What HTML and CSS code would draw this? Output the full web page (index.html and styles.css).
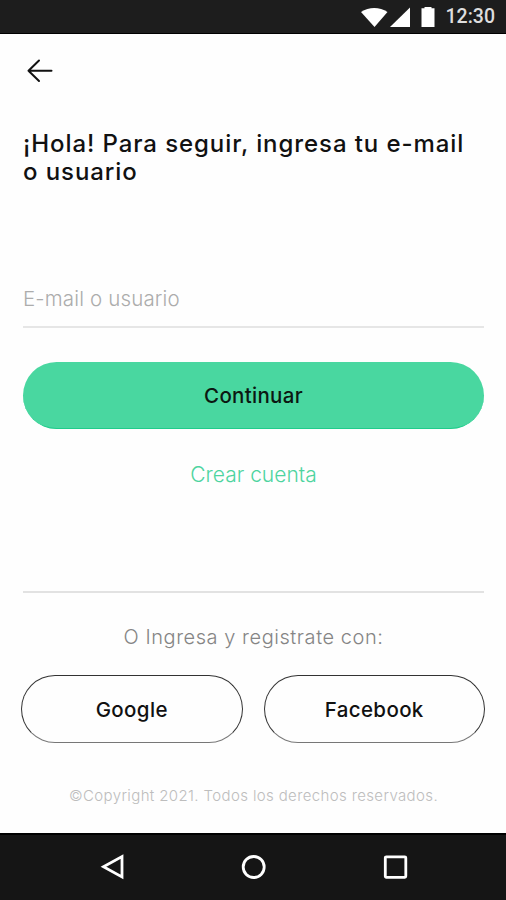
FILE: index.html
```
<!DOCTYPE html>
<html lang="es">
<head>
  <meta charset="UTF-8">
  <meta name="viewport" content="width=device-width, initial-scale=1">
  <title>Ingresar</title>
  <link rel="stylesheet" href="styles.css">
</head>
<body>
  <header class="status-bar">
    <svg width="76" height="22" viewBox="0 0 76 22" fill="#fff">
      <path d="M0 6C8 0.5 18.500 0.5 26.500 6L13.500 21Z"/>
      <path d="M49 1.500V21H29Z"/>
      <path d="M63.500 1h7v1.300h3V21H60.500V2.300H63.500Z"/>
    </svg>
    <span class="time">12:30</span>
  </header>

  <main>
    <a class="back" href="#" aria-label="Volver">
      <svg width="26" height="24" viewBox="0 0 26 24" fill="none" stroke="#111" stroke-width="2" stroke-linecap="round" stroke-linejoin="round">
        <path d="M12 1.500L1.500 11.700L12 22M1.500 11.700H24.500"/>
      </svg>
    </a>

    <h1>¡Hola! Para seguir, ingresa tu e-mail<br>o usuario</h1>

    <form>
      <input type="text" class="user" placeholder="E-mail o usuario">
      <button type="button" class="continue">Continuar</button>
    </form>
    <a class="create" href="#">Crear cuenta</a>

    <section class="social">
      <p class="social-title">O Ingresa y registrate con:</p>
      <div class="social-buttons">
        <button type="button" class="google">Google</button>
        <button type="button" class="facebook">Facebook</button>
      </div>
    </section>

    <footer>©Copyright 2021. Todos los derechos reservados.</footer>
  </main>

  <nav class="nav-bar">
    <svg width="26" height="28" viewBox="0 0 26 28"><path d="M4.500 12.700L23 2.500V22.900Z"/></svg>
    <svg width="26" height="28" viewBox="0 0 26 28"><circle cx="12.700" cy="13" r="10.500"/></svg>
    <svg width="26" height="28" viewBox="0 0 26 28"><rect x="2.300" y="2.800" width="20.500" height="20.500" rx="1"/></svg>
  </nav>
</body>
</html>
```
FILE: styles.css
```
* {
  box-sizing: border-box;
}

body {
  margin: 0;
  height: 900px;
  display: flex;
  flex-direction: column;
  background: #fefefe;
  color: #111;
  font-family: Inter, sans-serif;
  overflow: hidden;
}

a {
  text-decoration: none;
}

button,
input {
  font-family: inherit;
}

.status-bar {
  height: 34px;
  padding: 0 11px 0 0;
  display: flex;
  justify-content: flex-end;
  gap: 9px;
  background: #1d1d1d;
  border-bottom: 1px solid #000;
}

.status-bar svg {
  margin-top: 6px;
}

.time {
  color: #dedede;
  font-family: Roboto, sans-serif;
  font-size: 19.5px;
  font-weight: 500;
  line-height: 33px;
}

main {
  flex: 1;
  padding: 25px 22px 0 23px;
}

.back {
  display: block;
  height: 24px;
  padding-left: 4px;
}

.back svg {
  display: block;
}

h1 {
  margin: 47px 0 0;
  font-size: 24px;
  font-weight: 500;
  line-height: 28px;
  letter-spacing: 0.92px;
  white-space: nowrap;
}

.user {
  display: block;
  width: 100%;
  height: 58px;
  margin-top: 84px;
  padding: 0;
  border: none;
  border-bottom: 2px solid #e6e6e6;
  background: none;
  font-size: 20.5px;
  font-weight: 300;
  letter-spacing: 0.15px;
}

.user::placeholder {
  color: #acacac;
}

.continue {
  display: block;
  width: 100%;
  height: 67px;
  margin-top: 34px;
  border: none;
  border-bottom: 1px solid #1fcc8b;
  border-radius: 34px;
  background: #49d7a0;
  color: #0c1712;
  font-size: 20.5px;
  font-weight: 500;
  letter-spacing: 0.3px;
}

.create {
  display: block;
  margin-top: 31px;
  color: #4dd4a0;
  font-size: 21px;
  font-weight: 300;
  line-height: 30px;
  text-align: center;
}

.social {
  margin-top: 101px;
  padding-top: 28px;
  border-top: 2px solid #e2e2e2;
}

.social-title {
  margin: 0;
  color: #858585;
  font-size: 20px;
  font-weight: 300;
  line-height: 32px;
  letter-spacing: 0.55px;
  text-align: center;
}

.social-buttons {
  display: flex;
  gap: 21px;
  margin: 22px -1px 0 -2px;
}

.social-buttons button {
  flex: 1;
  height: 68px;
  padding: 0;
  border: 1px solid #333;
  border-bottom-color: #777;
  border-radius: 34px;
  background: none;
  color: #111;
  font-size: 20.5px;
  font-weight: 500;
  letter-spacing: 0.35px;
}

footer {
  margin-top: 43px;
  color: #bdbdbd;
  font-size: 15px;
  font-weight: 300;
  line-height: 20px;
  letter-spacing: 0.37px;
  text-align: center;
}

.nav-bar {
  height: 67px;
  padding: 19px 97px 0 99px;
  display: flex;
  justify-content: space-between;
  background: #151515;
  border-top: 2px solid #000;
}

.nav-bar svg {
  fill: none;
  stroke: #fff;
  stroke-width: 2.8;
}
```
